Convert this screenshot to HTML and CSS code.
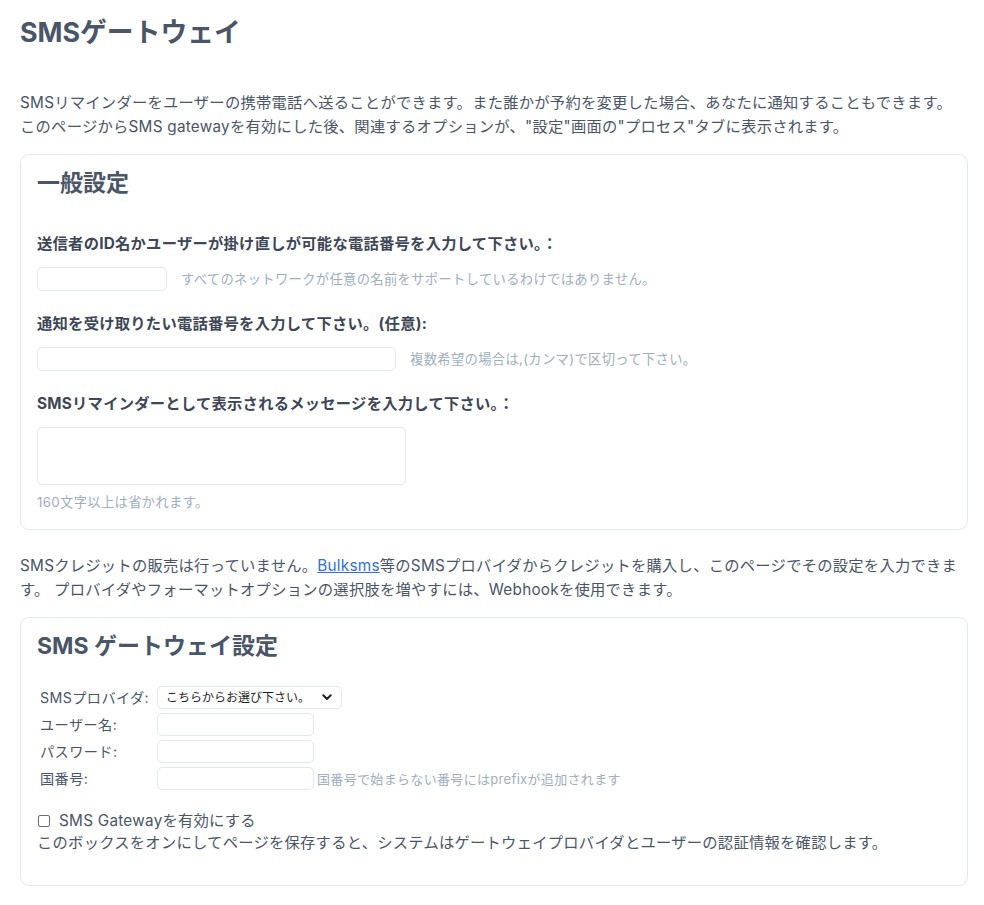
FILE: index.html
```html
<!DOCTYPE html>
<html lang="ja">
<head>
<meta charset="utf-8">
<title>SMSゲートウェイ</title>
<link rel="stylesheet" href="styles.css">
</head>
<body>
<main class="page">
  <h1 class="page-title">SMSゲートウェイ</h1>
  <p class="intro intro-top">SMSリマインダーをユーザーの携帯電話へ送ることができます。また誰かが予約を変更した場合、あなたに通知することもできます。<br>このページからSMS gatewayを有効にした後、関連するオプションが、"設定"画面の"プロセス"タブに表示されます。</p>

  <section class="card card-general">
    <h2 class="card-title">一般設定</h2>

    <div class="field">
      <label class="field-label">送信者のID名かユーザーが掛け直しが可能な電話番号を入力して下さい。：</label>
      <div class="field-row">
        <input class="input input-sender" type="text">
        <span class="hint">すべてのネットワークが任意の名前をサポートしているわけではありません。</span>
      </div>
    </div>

    <div class="field">
      <label class="field-label">通知を受け取りたい電話番号を入力して下さい。(任意):</label>
      <div class="field-row">
        <input class="input input-notify" type="text">
        <span class="hint">複数希望の場合は,(カンマ)で区切って下さい。</span>
      </div>
    </div>

    <div class="field">
      <label class="field-label">SMSリマインダーとして表示されるメッセージを入力して下さい。：</label>
      <textarea class="input textarea"></textarea>
      <div class="hint hint-below">160文字以上は省かれます。</div>
    </div>
  </section>

  <p class="intro intro-mid">SMSクレジットの販売は行っていません。<a class="link" href="#">Bulksms</a>等のSMSプロバイダからクレジットを購入し、このページでその設定を入力できます。 プロバイダやフォーマットオプションの選択肢を増やすには、Webhookを使用できます。</p>

  <section class="card card-gateway">
    <h2 class="card-title">SMS ゲートウェイ設定</h2>

    <div class="gw-grid">
      <span class="gw-label">SMSプロバイダ:</span>
      <div class="select-wrap">
        <select class="select">
          <option>こちらからお選び下さい。</option>
        </select>
        <svg class="select-chevron" width="10" height="7" viewBox="0 0 10 7"><path d="M1.3 1.3 L5 5 L8.7 1.3" fill="none" stroke="#1f1f1f" stroke-width="2" stroke-linecap="round" stroke-linejoin="round"/></svg>
      </div>

      <span class="gw-label">ユーザー名:</span>
      <div class="gw-control"><input class="input input-gw" type="text"></div>

      <span class="gw-label">パスワード:</span>
      <div class="gw-control"><input class="input input-gw" type="password"></div>

      <span class="gw-label">国番号:</span>
      <div class="gw-control"><input class="input input-gw" type="text"><span class="hint hint-gw">国番号で始まらない番号にはprefixが追加されます</span></div>
    </div>

    <label class="check"><input class="checkbox" type="checkbox"><span>SMS Gatewayを有効にする</span></label>
    <p class="check-note">このボックスをオンにしてページを保存すると、システムはゲートウェイプロバイダとユーザーの認証情報を確認します。</p>
  </section>
</main>
</body>
</html>
```

FILE: styles.css
```css
html, body {
  margin: 0;
  padding: 0;
  background: #ffffff;
}

body {
  font-family: Inter, "Noto Sans CJK JP", sans-serif;
  font-size: 15.3px;
  line-height: 24px;
  letter-spacing: 0.25px;
  color: #4a5568;
}

.page {
  padding: 0 16px 20px 20px;
}

.page-title {
  margin: 15px 0 0;
  font-size: 26.8px;
  line-height: 34px;
  font-weight: 700;
  letter-spacing: 0;
  color: #4a5568;
}

.intro {
  margin: 0;
}

.intro-top {
  margin-top: 42px;
  margin-bottom: 15px;
}

.intro-mid {
  margin-top: 24px;
  margin-bottom: 15px;
}

.link {
  color: #2f6fde;
  text-decoration: underline;
}

.card {
  border: 1px solid #e2e8f0;
  border-radius: 9px;
  padding: 13px 16px 17px;
}

.card-gateway {
  padding-bottom: 31px;
}

.card-title {
  margin: 0;
  font-size: 23px;
  line-height: 30px;
  font-weight: 700;
  letter-spacing: 0;
  color: #4a5568;
}

.field {
  margin-top: 21px;
}

.card-title + .field {
  margin-top: 34px;
}

.field-label {
  display: block;
  font-weight: 700;
  color: #3d4656;
  margin-bottom: 11px;
}

.field-row {
  display: flex;
  align-items: center;
  gap: 14px;
}

.input {
  box-sizing: border-box;
  display: block;
  margin: 0;
  height: 24px;
  border: 1px solid #e2e8f0;
  border-radius: 5px;
  background: #ffffff;
  font: inherit;
  font-size: 13px;
  padding: 0 6px;
  outline: none;
}

.input-sender {
  width: 130px;
}

.input-notify {
  width: 359px;
}

.textarea {
  width: 369px;
  height: 58px;
  resize: none;
}

.hint {
  font-size: 13.3px;
  line-height: 20px;
  letter-spacing: 0.33px;
  color: #a0aec0;
}

.hint-below {
  margin-top: 7px;
}

.gw-grid {
  display: grid;
  grid-template-columns: 117px auto;
  row-gap: 4px;
  align-items: center;
  margin: 25px 0 0 3px;
  justify-content: start;
}

.gw-label {
  font-size: 14.2px;
  line-height: 23px;
  letter-spacing: 0.4px;
  color: #4a5568;
}

.gw-control {
  display: flex;
  align-items: center;
  gap: 3px;
}

.input-gw {
  width: 157px;
  height: 23px;
}

.hint-gw {
  font-size: 13px;
}

.select-wrap {
  position: relative;
  width: 185px;
}

.select {
  box-sizing: border-box;
  display: block;
  width: 185px;
  height: 23px;
  margin: 0;
  padding: 0 24px 0 8px;
  border: 1px solid #e2e8f0;
  border-radius: 5px;
  background: #ffffff;
  font-family: Inter, "Noto Sans CJK JP", sans-serif;
  font-size: 12px;
  letter-spacing: 0;
  color: #1f1f1f;
  appearance: none;
  -webkit-appearance: none;
  outline: none;
}

.select-chevron {
  position: absolute;
  right: 10px;
  top: 8px;
  pointer-events: none;
}

.check {
  display: flex;
  align-items: center;
  gap: 9px;
  margin-top: 20px;
  line-height: 22px;
  color: #4a5568;
}

.checkbox {
  appearance: none;
  -webkit-appearance: none;
  box-sizing: border-box;
  width: 12px;
  height: 12px;
  margin: 0 0 0 1px;
  border: 1px solid #6b6b6b;
  border-radius: 2px;
  background: #ffffff;
}

.check-note {
  margin: 0;
  line-height: 22px;
}
```
